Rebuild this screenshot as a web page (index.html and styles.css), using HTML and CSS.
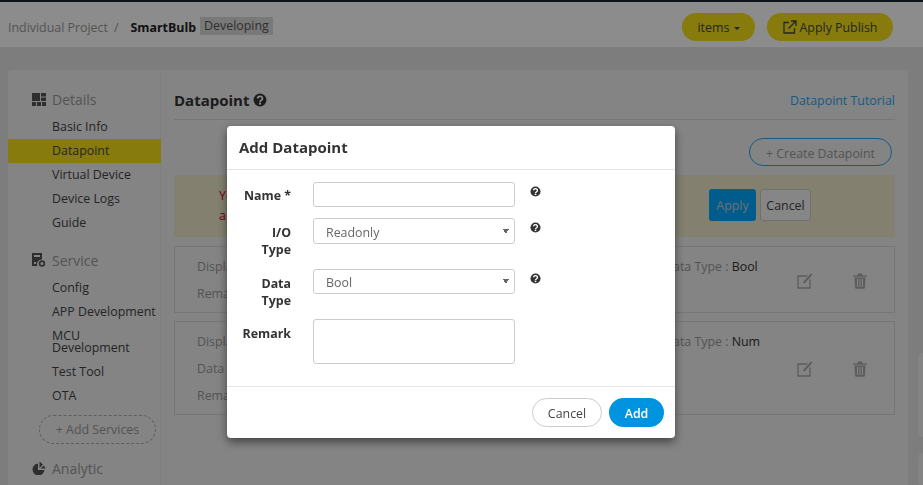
FILE: index.html
```html
<!DOCTYPE html>
<html lang="en">
<head>
    <meta charset="UTF-8">
    <meta name="viewport" content="width=device-width, initial-scale=1.0">
    <title>Add Datapoint</title>
    <link rel="stylesheet" href="styles.css">
</head>
<body>

    <svg class="defs" width="0" height="0">
        <symbol id="help" viewBox="0 0 12 12">
            <circle cx="6" cy="6" r="5.5" fill="currentColor"/>
            <path d="M3.9 4.7a2.1 1.9 0 1 1 3.3 1.6c-.8.5-1.2.8-1.2 1.4" fill="none" stroke="#fff" stroke-width="1.5"/>
            <rect x="5.1" y="8.3" width="1.8" height="1.6" fill="#fff"/>
        </symbol>
        <symbol id="edit" viewBox="0 0 16 16">
            <path d="M10.500 3H1v12h12V6.500" fill="none" stroke="currentColor" stroke-width="1.400"/>
            <path d="M6 10.600l.6-2.200L14 0.500l1.400 1.200L8 9.900z" fill="currentColor"/>
        </symbol>
        <symbol id="trash" viewBox="0 0 14 16">
            <path d="M0 2.400h4.400L5 .6h4l.6 1.800H14v1.400H0z" fill="currentColor"/>
            <path d="M1.400 4.600h11.200l-.7 10.200q0 1-1 1H3.100q-1 0-1-1zM4 6v8h1.100V6zM6.450 6v8h1.100V6zM8.900 6v8H10V6z" fill="currentColor" fill-rule="evenodd"/>
        </symbol>
    </svg>

    <header class="topbar">
        <div class="crumbs">
            <span class="crumb">Individual Project</span>
            <span class="crumb-sep">/</span>
            <strong class="crumb-name">SmartBulb</strong>
            <span class="badge">Developing</span>
        </div>
        <div class="top-actions">
            <button type="button" class="btn-yellow btn-items">items <i class="caret"></i></button>
            <button type="button" class="btn-yellow btn-publish">
                <svg width="14" height="14" viewBox="0 0 14 14"><path d="M6 2.500H1v10.500h10.500V8M5.500 8.500L12.500 1.500M8 1h5v5" fill="none" stroke="currentColor" stroke-width="1.300"/></svg>
                Apply Publish
            </button>
        </div>
    </header>

    <div class="panel">
        <nav class="sidebar">
            <h4 class="side-title side-title-first">
                <svg width="14" height="13" viewBox="0 0 14 13"><path d="M0 0h8v8H0zM9 0h5v3.500H9zM9 4.500h5V8H9zM0 9h4v4H0zM5 9h4v4H5zM10 9h4v4h-4z" fill="currentColor"/></svg>
                Details
            </h4>
            <a class="side-item">Basic Info</a>
            <a class="side-item active">Datapoint</a>
            <a class="side-item">Virtual Device</a>
            <a class="side-item">Device Logs</a>
            <a class="side-item">Guide</a>

            <h4 class="side-title">
                <svg width="14" height="14" viewBox="0 0 14 14"><path d="M0 0h10v6.500A4.500 4.500 0 0 0 5.500 13H0zM2 2v2h6V2zM2 9v2h2V9z" fill="currentColor" fill-rule="evenodd"/><circle cx="10" cy="10.500" r="2.400" fill="none" stroke="currentColor" stroke-width="1.600"/></svg>
                Service
            </h4>
            <a class="side-item">Config</a>
            <a class="side-item">APP Development</a>
            <a class="side-item">MCU Development</a>
            <a class="side-item">Test Tool</a>
            <a class="side-item">OTA</a>
            <button type="button" class="add-services">+ Add Services</button>

            <h4 class="side-title side-title-last">
                <svg width="14" height="14" viewBox="0 0 14 14"><path d="M6 2.500A6 6 0 1 0 12.500 9H6z" fill="currentColor"/><path d="M7.500 0.500L11 3.500 7.500 7zM8.500 7.500L12 4.500l1.500 3z" fill="currentColor"/></svg>
                Analytic
            </h4>
        </nav>

        <main class="content">
            <div class="content-head">
                <h3 class="content-title">Datapoint <svg class="help-big" width="14" height="14"><use href="#help"/></svg></h3>
                <a class="tutorial">Datapoint Tutorial</a>
            </div>

            <div class="create-row">
                <button type="button" class="btn-create">+ Create Datapoint</button>
            </div>

            <div class="notice">
                <p class="notice-text">You have modified the datapoints,<br>apply them to take effect.</p>
                <div class="notice-actions">
                    <button type="button" class="btn-apply">Apply</button>
                    <button type="button" class="btn-plain">Cancel</button>
                </div>
            </div>

            <div class="dp-card">
                <div class="dp-info">
                    <div class="dp-cols">
                        <span class="dp-label">Display Name : switch</span>
                        <span class="dp-type"><span class="dp-label">Data Type :</span> Bool</span>
                    </div>
                    <div class="dp-line dp-label">Remark : none</div>
                </div>
                <div class="dp-tools">
                    <svg width="16" height="16"><use href="#edit"/></svg>
                    <svg width="14" height="16"><use href="#trash"/></svg>
                </div>
            </div>

            <div class="dp-card">
                <div class="dp-info">
                    <div class="dp-cols">
                        <span class="dp-label">Display Name : level</span>
                        <span class="dp-type"><span class="dp-label">Data Type :</span> Num</span>
                    </div>
                    <div class="dp-line dp-label">Data range : 0-100</div>
                    <div class="dp-line dp-label">Remark : none</div>
                </div>
                <div class="dp-tools">
                    <svg width="16" height="16"><use href="#edit"/></svg>
                    <svg width="14" height="16"><use href="#trash"/></svg>
                </div>
            </div>
        </main>
    </div>

    <div class="side-float side-float-a"></div>
    <div class="side-float side-float-b"></div>

    <div class="backdrop"></div>

    <div class="modal-wrap">
        <div class="modal">
            <div class="modal-head">Add Datapoint</div>
            <form class="modal-body">
                <label class="field-label field-label-name" for="dpName">Name *</label>
                <input class="field-input field-name" type="text" id="dpName">
                <svg class="field-help" width="11" height="11"><use href="#help"/></svg>

                <label class="field-label" for="dpIo">I/O<br>Type</label>
                <select class="field-input field-select" id="dpIo"><option>Readonly</option></select>
                <svg class="field-help" width="11" height="11"><use href="#help"/></svg>

                <label class="field-label" for="dpType">Data<br>Type</label>
                <select class="field-input field-select field-select-last" id="dpType"><option>Bool</option></select>
                <svg class="field-help" width="11" height="11"><use href="#help"/></svg>

                <label class="field-label" for="dpRemark">Remark</label>
                <textarea class="field-input field-area" id="dpRemark"></textarea>
            </form>
            <div class="modal-foot">
                <button type="button" class="btn-cancel">Cancel</button>
                <button type="button" class="btn-add">Add</button>
            </div>
        </div>
    </div>

</body>
</html>
```

FILE: styles.css
```css
* {
    box-sizing: border-box;
}

html,
body {
    height: 485px;
    overflow: hidden;
}

body {
    margin: 0;
    font-family: "Open Sans", Arial, sans-serif;
    font-size: 12.4px;
    color: #333;
    background-color: #e4e4e4;
}

button {
    font-family: inherit;
    cursor: pointer;
}

.defs {
    display: block;
    height: 0;
}

/* top bar */
.topbar {
    display: flex;
    justify-content: space-between;
    align-items: center;
    height: 48px;
    padding: 5px 30px 0 8px;
    border-top: 2px solid #1d2530;
    border-bottom: 1px solid #e6e6e6;
    background-color: #fff;
}

.crumbs {
    display: flex;
    align-items: center;
}

.crumb {
    color: #999;
}

.crumb-sep {
    margin: 0 12px 0 6px;
    color: #999;
}

.crumb-name {
    color: #222;
}

.badge {
    margin: -2px 0 0 4px;
    padding: 0 4px;
    height: 18px;
    line-height: 17px;
    color: #555;
    background-color: #ddd;
}

.top-actions {
    display: flex;
    gap: 12px;
}

.btn-yellow {
    height: 28px;
    padding: 0;
    border: 0;
    border-radius: 14px;
    font-size: 12.4px;
    color: #444;
    background-color: #f5e116;
}

.btn-items {
    width: 73px;
}

.btn-publish {
    display: flex;
    align-items: center;
    justify-content: center;
    gap: 3px;
    width: 126px;
}

.caret {
    display: inline-block;
    margin-left: 1px;
    vertical-align: middle;
    border-top: 3px solid #444;
    border-left: 3px solid transparent;
    border-right: 3px solid transparent;
}

/* main panel */
.panel {
    display: flex;
    height: 415px;
    margin: 22px 15px 0 8px;
    overflow: hidden;
    border-radius: 4px 4px 0 0;
    background-color: #f0f0f0;
}

.sidebar {
    flex: none;
    width: 153px;
    padding: 19px 4px 0 0;
    border-right: 1px solid #e8e8e8;
}

.side-title {
    display: flex;
    align-items: center;
    gap: 6px;
    height: 22px;
    margin: 15px 0 4px 24px;
    padding-bottom: 2px;
    font-size: 14px;
    font-weight: 400;
    color: #999;
}

.side-title svg {
    color: #555;
}

.side-title-first {
    margin-top: 0;
}

.side-title-last {
    margin-top: 14px;
}

.side-item {
    display: block;
    padding: 6px 0 6px 44px;
    line-height: 12px;
    font-size: 12.4px;
    color: #444;
}

.side-item.active {
    margin-right: -5px;
    background-color: #f5e116;
}

.add-services {
    display: block;
    width: 117px;
    height: 29px;
    margin: 7px 0 0 31px;
    padding: 0;
    border: 1px dashed #aaa;
    border-radius: 15px;
    font-size: 12.4px;
    color: #999;
    background: none;
}

.content {
    flex: 1;
    padding: 0 13px;
}

.content-head {
    display: flex;
    justify-content: space-between;
    align-items: center;
    height: 50px;
    padding-top: 11px;
    border-bottom: 1px solid #d8d8d8;
}

.content-title {
    display: flex;
    align-items: center;
    gap: 4px;
    margin: 0;
    font-size: 15px;
    font-weight: 700;
    color: #333;
}

.tutorial {
    font-size: 12.4px;
    color: #1fa8f0;
}

.create-row {
    display: flex;
    justify-content: flex-end;
    padding: 18px 3px 9px 0;
}

.btn-create {
    width: 143px;
    height: 28px;
    padding: 2px 0 0;
    border: 1px solid #1fa8f0;
    border-radius: 15px;
    font-size: 12.4px;
    color: #999;
    background: none;
}

.notice {
    display: flex;
    justify-content: space-between;
    align-items: center;
    height: 62px;
    padding: 0 84px 0 45px;
    background-color: #eee9ca;
}

.notice-text {
    margin: 0;
    line-height: 20px;
    color: #d0021b;
}

.notice-actions {
    display: flex;
    gap: 4px;
    margin-top: -2px;
}

.btn-apply {
    width: 47px;
    height: 32px;
    padding: 0;
    border: 0;
    border-radius: 3px;
    font-size: 12.4px;
    color: #ccc;
    background-color: #00a8ff;
}

.btn-plain {
    width: 51px;
    height: 32px;
    padding: 0;
    border: 1px solid #ccc;
    border-radius: 3px;
    font-size: 12.4px;
    color: #444;
    background-color: #f4f4f4;
}

.dp-card {
    display: flex;
    align-items: center;
    margin-top: 8px;
    padding: 13px 27px 11px 22px;
    border: 1px solid #d8d8d8;
}

.notice + .dp-card {
    margin-top: 9px;
}

.dp-info {
    flex: 1;
}

.dp-cols {
    display: flex;
    line-height: 14px;
}

.dp-cols .dp-label:first-child {
    width: 467px;
}

.dp-line {
    margin-top: 13px;
    line-height: 14px;
}

.dp-label {
    color: #999;
}

.dp-type {
    white-space: nowrap;
    color: #333;
}

.dp-tools {
    display: flex;
    flex: none;
    gap: 40px;
    color: #aaa;
}

.side-float {
    position: absolute;
    left: 918px;
    width: 5px;
    border: 1px solid #eee;
    border-right: 0;
    border-radius: 4px 0 0 4px;
    background-color: #f0f0f0;
}

.side-float-a {
    top: 353px;
    height: 84px;
}

.side-float-b {
    top: 453px;
    height: 32px;
    border-bottom: 0;
}

/* modal */
.backdrop {
    position: fixed;
    inset: 0;
    background-color: rgba(0, 0, 0, 0.45);
}

.modal-wrap {
    position: fixed;
    inset: 0;
    padding: 126px 0 0 227px;
}

.modal {
    width: 448px;
    height: 312px;
    border-radius: 4px;
    box-shadow: 0 4px 10px rgba(0, 0, 0, 0.5);
    background-color: #fff;
}

.modal-head {
    height: 44px;
    padding: 0 12px;
    line-height: 43px;
    border-bottom: 1px solid #e5e5e5;
    font-size: 15px;
    font-weight: 700;
    color: #333;
}

.modal-body {
    display: grid;
    grid-template-columns: 86px 202px 26px;
    align-items: start;
    align-content: start;
    height: 216px;
    padding-top: 12px;
}

.field-label {
    justify-self: end;
    margin: 6px 22px 0 0;
    text-align: right;
    font-weight: 700;
    line-height: 17px;
    color: #333;
}

.field-label-name {
    margin-top: 5px;
}

.field-input {
    display: block;
    width: 202px;
    margin: 0;
    border: 1px solid #ccc;
    border-radius: 3px;
    font-family: inherit;
    font-size: 12.4px;
    color: #666;
    background-color: #fff;
}

.field-name {
    height: 25px;
    margin-bottom: 11px;
}

.field-select {
    height: 26px;
    padding: 2px 0 0 12px;
    margin-bottom: 25px;
    appearance: none;
    background-image: linear-gradient(to top right, transparent 50%, #666 50%), linear-gradient(to top left, transparent 50%, #666 50%);
    background-size: 3px 5px;
    background-position: calc(100% - 8px) 50%, calc(100% - 5px) 50%;
    background-repeat: no-repeat;
}

.field-select-last {
    height: 25px;
}

.field-area {
    height: 45px;
    resize: none;
}

.field-help {
    margin: 4px 0 0 15px;
    color: #333;
}

.modal-foot {
    display: flex;
    justify-content: flex-end;
    gap: 7px;
    height: 52px;
    padding: 11px 11px 0 0;
    border-top: 1px solid #e5e5e5;
}

.btn-cancel,
.btn-add {
    height: 29px;
    padding: 2px 0 0;
    border-radius: 15px;
    font-size: 12.4px;
}

.btn-cancel {
    width: 70px;
    border: 1px solid #ccc;
    color: #444;
    background-color: #fff;
}

.btn-add {
    width: 55px;
    border: 0;
    font-weight: 600;
    color: #fff;
    background-color: #0094e0;
}
```
